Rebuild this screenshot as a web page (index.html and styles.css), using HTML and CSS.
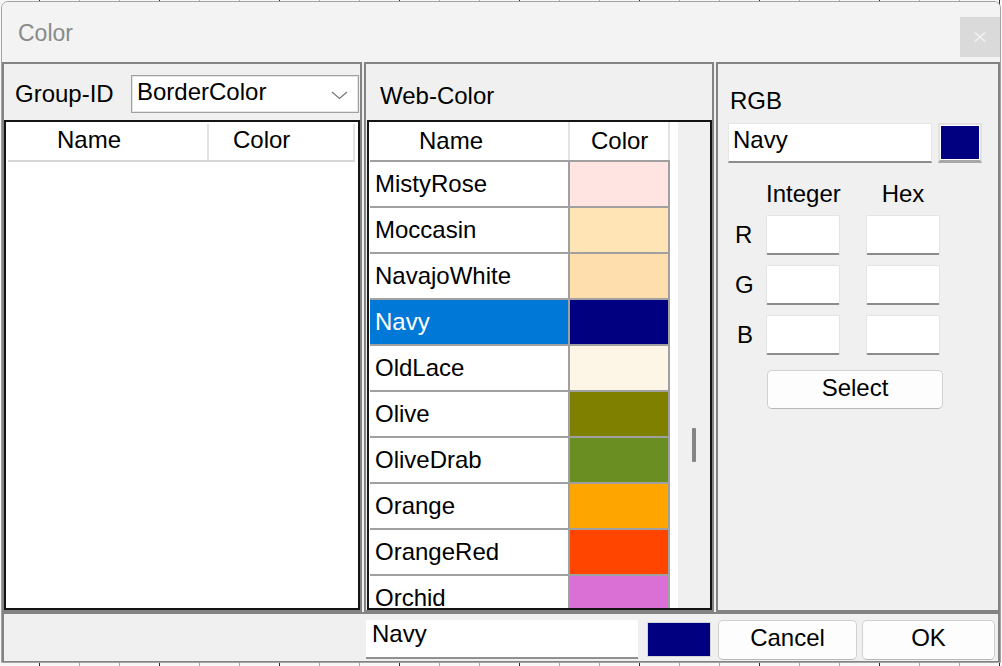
FILE: index.html
```html
<!DOCTYPE html>
<html>
<head>
<meta charset="utf-8">
<title>Color</title>
<link rel="stylesheet" href="styles.css">
</head>
<body>
<div class="window">
  <div class="titlebar">
    <span class="title">Color</span>
    <div class="close">
      <svg width="14" height="12" viewBox="0 0 14 12"><path d="M2 1.5 L12 10.5 M12 1.5 L2 10.5" stroke="#f2f2f2" stroke-width="1.6" fill="none"/></svg>
    </div>
  </div>
  <div class="main">
    <section class="panel p-group">
      <div class="group-row">
        <span class="label">Group-ID</span>
        <div class="combo">
          <span class="combo-text">BorderColor</span>
          <svg class="chev" width="17" height="9" viewBox="0 0 17 9"><polyline points="1,1 8.5,7.5 16,1" stroke="#7a7a7a" stroke-width="1.2" fill="none"/></svg>
        </div>
      </div>
      <div class="list list-group">
        <div class="ghead">
          <div class="gh-name">Name</div>
          <div class="gh-color">Color</div>
        </div>
      </div>
    </section>
    <section class="panel p-web">
      <div class="web-label">Web-Color</div>
      <div class="list list-web">
        <div class="table-area">
          <div class="table">
            <div class="whead">
              <div class="wh-name">Name</div>
              <div class="wh-color">Color</div>
            </div>
            <div class="row"><div class="cname">MistyRose</div><div class="ccolor" style="background:#FFE4E1"></div></div>
            <div class="row"><div class="cname">Moccasin</div><div class="ccolor" style="background:#FFE4B5"></div></div>
            <div class="row"><div class="cname">NavajoWhite</div><div class="ccolor" style="background:#FFDEAD"></div></div>
            <div class="row selected"><div class="cname">Navy</div><div class="ccolor" style="background:#000080"></div></div>
            <div class="row"><div class="cname">OldLace</div><div class="ccolor" style="background:#FDF5E6"></div></div>
            <div class="row"><div class="cname">Olive</div><div class="ccolor" style="background:#808000"></div></div>
            <div class="row"><div class="cname">OliveDrab</div><div class="ccolor" style="background:#6B8E23"></div></div>
            <div class="row"><div class="cname">Orange</div><div class="ccolor" style="background:#FFA500"></div></div>
            <div class="row"><div class="cname">OrangeRed</div><div class="ccolor" style="background:#FF4500"></div></div>
            <div class="row"><div class="cname">Orchid</div><div class="ccolor" style="background:#DA70D6"></div></div>
          </div>
        </div>
        <div class="scroll"><div class="thumb"></div></div>
      </div>
    </section>
    <section class="panel p-rgb">
      <div class="rgb-label">RGB</div>
      <div class="name-row">
        <div class="name-input">Navy</div>
        <div class="swatch"><div class="swatch-fill"></div></div>
      </div>
      <div class="value-grid">
        <div class="gl-head c-int r0">Integer</div>
        <div class="gl-head c-hex r0">Hex</div>
        <div class="gl-label r1">R</div>
        <div class="vbox c-int r1"></div>
        <div class="vbox c-hex r1"></div>
        <div class="gl-label r2">G</div>
        <div class="vbox c-int r2"></div>
        <div class="vbox c-hex r2"></div>
        <div class="gl-label gl-b r3">B</div>
        <div class="vbox c-int r3"></div>
        <div class="vbox c-hex r3"></div>
      </div>
      <div class="btn btn-select">Select</div>
    </section>
  </div>
  <div class="bottom">
    <div class="bottom-input">Navy</div>
    <div class="bottom-swatch"></div>
    <div class="btn btn-cancel">Cancel</div>
    <div class="btn btn-ok">OK</div>
  </div>
</div>
</body>
</html>
```

FILE: styles.css
```css
html, body {
  margin: 0;
  padding: 0;
  width: 1002px;
  height: 666px;
  overflow: hidden;
}
body {
  background-color: #f7f7f7;
  background-image:
    repeating-linear-gradient(90deg, transparent 0 39px, #2e2e2e 39px 40px, transparent 40px 120px),
    repeating-linear-gradient(90deg, transparent 0 39px, #a8a8a8 39px 40px);
  font-family: "Liberation Sans", Arial, sans-serif;
  font-size: 24px;
  color: #000;
  padding: 1px 0 0 1px;
  box-sizing: border-box;
}
.window {
  width: 1000px;
  height: 662px;
  box-sizing: border-box;
  border: 1px solid #a3a3a3;
  border-radius: 7px 7px 0 0;
  background: #f0f0f0;
  display: flex;
  flex-direction: column;
  overflow: hidden;
}
.titlebar {
  height: 60px;
  flex: none;
  background: #f3f3f3;
  display: flex;
  align-items: flex-start;
}
.title {
  font-size: 23px;
  line-height: 38px;
  color: #8a8a8a;
  padding: 12px 0 0 16px;
}
.close {
  margin: 15px 0 0 auto;
  width: 40px;
  height: 40px;
  background: #dadada;
  display: flex;
  align-items: center;
  justify-content: center;
}
.main {
  height: 550px;
  flex: none;
  display: flex;
  gap: 2px;
}
.panel {
  box-sizing: border-box;
  height: 550px;
  border: 2px solid #838383;
  background: #f0f0f0;
  display: flex;
  flex-direction: column;
}
.p-group { width: 360px; }
.p-web { width: 350px; }
.p-rgb { width: 284px; }

/* group panel */
.group-row {
  height: 56px;
  flex: none;
  display: flex;
  align-items: flex-start;
  padding-top: 11px;
  box-sizing: border-box;
}
.label {
  line-height: 38px;
  padding-left: 11px;
}
.combo {
  margin: 0 1px 0 auto;
  width: 228px;
  height: 38px;
  box-sizing: border-box;
  background: #fff;
  border: 1px solid #a0a0a0;
  box-shadow: inset 0 0 0 1px #e4e4e4;
  display: flex;
  align-items: flex-start;
}
.combo-text {
  line-height: 32px;
  padding-left: 5px;
}
.chev {
  margin: 15px 10px 0 auto;
}
.list {
  box-sizing: border-box;
  height: 490px;
  border: 2px solid #141414;
  background: #fff;
  overflow: hidden;
}
.list-group {
  padding: 2px 0 0 2px;
}
.ghead {
  display: flex;
  width: 347px;
  height: 38px;
  box-sizing: border-box;
  border-bottom: 2px solid #d6d6d6;
  background: #fff;
}
.gh-name {
  width: 201px;
  border-right: 2px solid #e3e3e3;
  line-height: 32px;
  padding-left: 49px;
  box-sizing: border-box;
}
.gh-color {
  width: 146px;
  border-right: 2px solid #e3e3e3;
  box-sizing: border-box;
  line-height: 32px;
  padding-left: 24px;
}

/* web panel */
.web-label {
  line-height: 38px;
  padding: 13px 0 0 14px;
  height: 56px;
  box-sizing: border-box;
  flex: none;
}
.list-web {
  margin-left: 1px;
  width: 345px;
  display: flex;
}
.table-area {
  width: 309px;
  padding-left: 1px;
  box-sizing: border-box;
  background: #fff;
}
.table {
  width: 300px;
}
.whead {
  display: flex;
  height: 40px;
  box-sizing: border-box;
  border-bottom: 2px solid #a0a0a0;
}
.wh-name {
  width: 200px;
  box-sizing: border-box;
  border-right: 2px solid #e3e3e3;
  line-height: 38px;
  padding-left: 49px;
}
.wh-color {
  width: 100px;
  box-sizing: border-box;
  border-right: 2px solid #e3e3e3;
  line-height: 38px;
  padding-left: 21px;
}
.row {
  display: flex;
  height: 46px;
  box-sizing: border-box;
  border-bottom: 2px solid #a0a0a0;
}
.cname {
  width: 200px;
  box-sizing: border-box;
  border-right: 2px solid #a0a0a0;
  line-height: 43px;
  padding-left: 5px;
  background: #fff;
}
.ccolor {
  width: 100px;
  box-sizing: border-box;
  border-right: 2px solid #a0a0a0;
}
.row.selected .cname {
  background: #0078d7;
  color: #fff;
}
.scroll {
  width: 32px;
  background: #f0f0f0;
  padding: 306px 0 0 14px;
  box-sizing: border-box;
}
.thumb {
  width: 4px;
  height: 34px;
  background: #858585;
  border-radius: 1px;
}

/* rgb panel */
.rgb-label {
  line-height: 38px;
  margin-top: 18px;
  padding-left: 12px;
}
.name-row {
  display: flex;
  margin: 3px 0 0 10px;
  gap: 6px;
  height: 40px;
}
.name-input {
  width: 204px;
  height: 40px;
  box-sizing: border-box;
  background: #fff;
  border: 1px solid #e6e6e6;
  border-bottom: 2px solid #8c8c8c;
  line-height: 32px;
  padding-left: 4px;
}
.swatch {
  width: 44px;
  height: 40px;
  box-sizing: border-box;
  border: 2px solid #e2e2e2;
  border-bottom: 3px solid #a8a8a8;
  background: #fff;
  padding: 1px;
}
.swatch-fill {
  width: 100%;
  height: 100%;
  background: #000080;
}
.value-grid {
  display: grid;
  grid-template-columns: 31px 74px 26px 74px;
  grid-template-rows: 22px 40px 40px 40px;
  row-gap: 10px;
  margin: 20px 0 0 17px;
}
.c-int { grid-column: 2; }
.c-hex { grid-column: 4; }
.r0 { grid-row: 1; }
.r1 { grid-row: 2; }
.r2 { grid-row: 3; }
.r3 { grid-row: 4; }
.gl-head {
  line-height: 22px;
  text-align: center;
  white-space: nowrap;
}
.gl-label {
  grid-column: 1;
  line-height: 40px;
}
.gl-b { padding-left: 2px; }
.vbox {
  background: #fff;
  border: 1px solid #e4e4e4;
  border-bottom: 2px solid #8c8c8c;
  border-radius: 2px;
}
.btn {
  box-sizing: border-box;
  background: #fdfdfd;
  border: 1px solid #d0d0d0;
  border-bottom-color: #b8b8b8;
  border-radius: 5px;
  text-align: center;
  line-height: 34px;
}
.btn-select {
  width: 176px;
  height: 39px;
  margin: 15px 0 0 49px;
}

/* bottom bar */
.bottom {
  height: 50px;
  flex: none;
  box-sizing: border-box;
  border: 2px solid #838383;
  border-bottom-width: 1px;
  background: #f0f0f0;
  display: flex;
  align-items: flex-start;
  padding: 6px 0 0 362px;
}
.bottom-input {
  width: 272px;
  height: 39px;
  box-sizing: border-box;
  background: #fff;
  border-bottom: 2px solid #909090;
  line-height: 28px;
  padding-left: 6px;
}
.bottom-swatch {
  width: 64px;
  height: 35px;
  margin: 2px 0 0 9px;
  box-sizing: border-box;
  border: 1px solid #d4d4d4;
  background: #000080;
}
.btn-cancel {
  width: 139px;
  height: 40px;
  margin-left: 7px;
}
.btn-ok {
  width: 133px;
  height: 40px;
  margin-left: 5px;
}
```
